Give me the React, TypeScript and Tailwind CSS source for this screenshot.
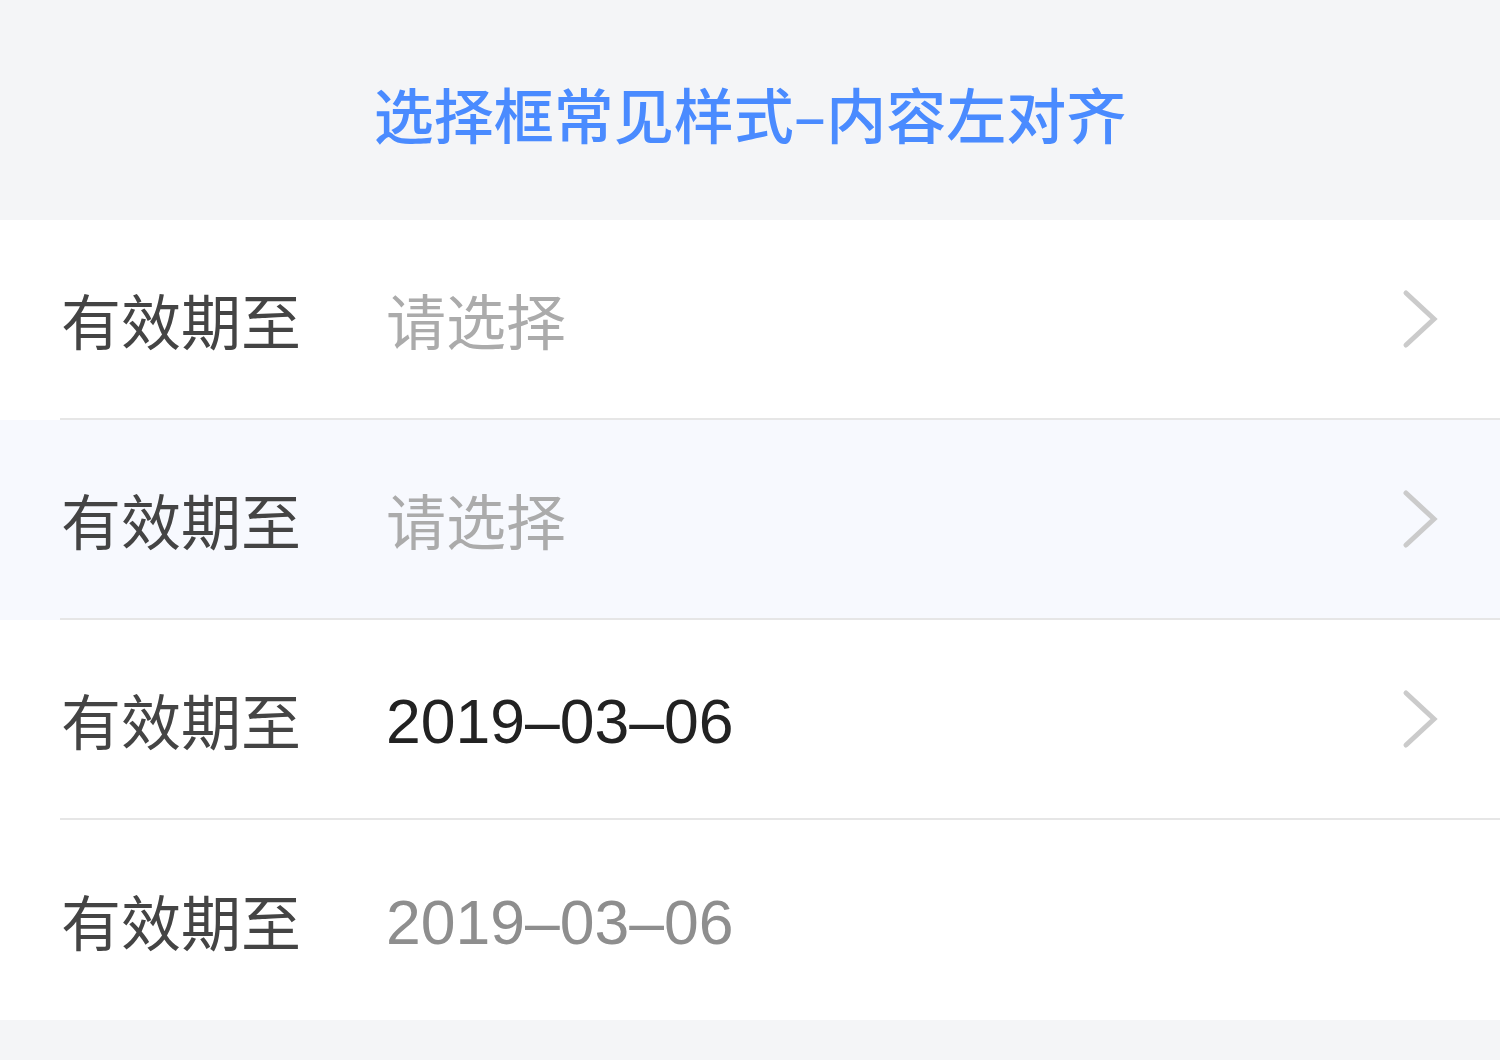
import React from 'react';

const cjk = { fontFamily: '"Noto Sans CJK SC", "Noto Sans", sans-serif' };
const latin = { fontFamily: '"Liberation Sans", Arial, "Noto Sans CJK SC", sans-serif' };

function Chevron() {
  return (
    <svg width="36" height="60" viewBox="0 0 36 60" className="shrink-0">
      <path d="M4 4 L32 30 L4 56" fill="none" stroke="#cbcbcb" strokeWidth="5" strokeLinecap="round" strokeLinejoin="miter" />
    </svg>
  );
}

interface RowProps {
  value: string;
  tone: 'placeholder' | 'filled' | 'disabled';
  active?: boolean;
  arrow?: boolean;
  divider?: boolean;
}

function Row({ value, tone, active, arrow = true, divider = true }: RowProps) {
  const isDate = /\d/.test(value);
  const color =
    tone === 'placeholder' ? 'text-[#ababab]' : tone === 'filled' ? 'text-[#222222]' : 'text-[#8e8e8e]';
  return (
    <div className={active ? 'bg-[#f7f9fe]' : 'bg-white'}>
      <div className={`ml-[60px] h-[200px] flex items-center pr-[62px] ${divider ? 'border-b-2 border-[#e6e6e6]' : ''}`}>
        <span className="w-[326px] pl-[1px] text-[60px] text-[#444444] leading-none" style={cjk}>
          有效期至
        </span>
        <span
          className={`flex-1 leading-none ${color} ${isDate ? 'text-[62.5px] mt-[4px]' : 'text-[60px]'}`}
          style={isDate ? latin : cjk}
        >
          {value}
        </span>
        {arrow && <Chevron />}
      </div>
    </div>
  );
}

export default function App() {
  return (
    <div className="w-[1500px] h-[1060px] bg-[#f4f5f7] flex flex-col">
      <div className="h-[220px] flex items-center justify-center pt-[6px]">
        <h1 className="text-[60px] font-medium text-[#4a8bff] leading-none" style={cjk}>
          选择框常见样式–内容左对齐
        </h1>
      </div>
      <Row value="请选择" tone="placeholder" />
      <Row value="请选择" tone="placeholder" active />
      <Row value="2019–03–06" tone="filled" />
      <Row value="2019–03–06" tone="disabled" arrow={false} divider={false} />
    </div>
  );
}
